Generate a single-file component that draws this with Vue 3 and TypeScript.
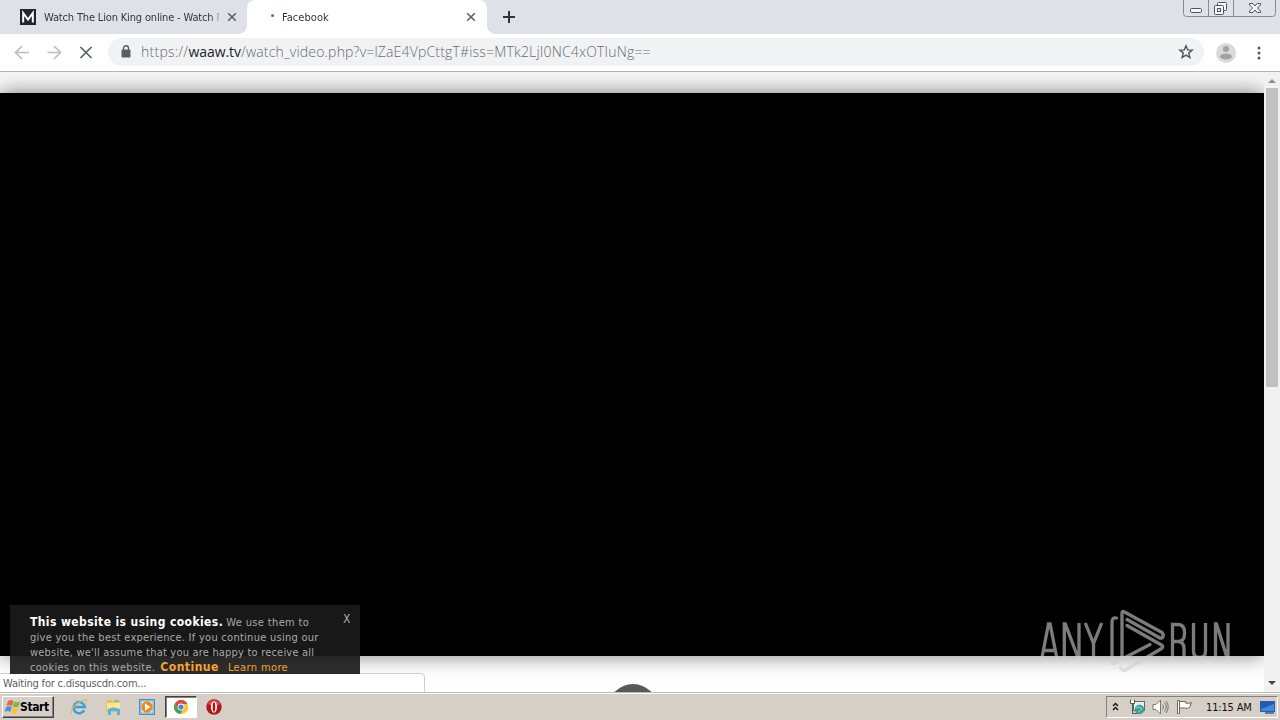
<script setup lang="ts">
interface Tab { title: string; active: boolean }
const tabs: Tab[] = [
  { title: 'Watch The Lion King online - Watch M', active: false },
  { title: 'Facebook', active: true },
]
const cookieLines: string[] = [
  'give you the best experience. If you continue using our',
  "website, we'll assume that you are happy to receive all",
]
</script>

<template>
  <div class="screen">
    <header class="tabstrip">
      <div v-for="tab in tabs" :key="tab.title" class="tab" :class="{ active: tab.active }">
        <svg v-if="!tab.active" class="fav" width="16" height="16" viewBox="0 0 16 16">
          <rect width="16" height="16" fill="#20262b" />
          <path d="M3.200 13.500V4L8 10.500 12.800 4v9.500" fill="none" stroke="#fff" stroke-width="2" />
        </svg>
        <span v-else class="fav"><i class="spinner"></i></span>
        <span class="tab-title">{{ tab.title }}</span>
        <svg class="tab-close" width="10" height="10" viewBox="0 0 10 10">
          <path d="M1.200 1.200l7.600 7.600M8.800 1.200L1.200 8.800" stroke="#5e6165" stroke-width="1.600" />
        </svg>
      </div>
      <svg class="plus" width="12" height="12" viewBox="0 0 12 12">
        <path d="M6 0v12M0 6h12" stroke="#30343b" stroke-width="2" />
      </svg>
      <div class="winbtns">
        <svg width="93" height="18" viewBox="0 0 93 18">
          <path d="M.5 0v13.500q0 3 3 3h86q3 0 3-3V0M25.500 0v16M50.500 0v16" fill="none" stroke="#858a95" />
          <g fill="#f4f5f8" stroke="#4d5360">
            <rect x="7.500" y="8.500" width="11" height="4" rx="1" />
            <rect x="34.500" y="2.500" width="9" height="8" rx="1" />
            <rect x="31.500" y="5.500" width="9" height="9" rx="1" />
            <rect x="34.500" y="8.500" width="3" height="3" />
            <path d="M66.500 3.500h3.500l2 2.500 2-2.500h3.500v1.500l-3 3 3 3v1.500H74l-2-2.500-2 2.500h-3.500V11l3-3-3-3z" />
          </g>
        </svg>
      </div>
    </header>

    <div class="toolbar">
      <svg class="nav" width="96" height="28" viewBox="0 0 96 28" fill="none" stroke-width="1.700">
        <path d="M22 13.500H9M15 7l-6.500 6.500L15 20M40.500 13.500h12.500M47 7l6.500 6.500L47 20" stroke="#bbbdbf" />
        <path d="M73.500 8l11 11M84.500 8l-11 11" stroke="#5b5e62" />
      </svg>
      <div class="omnibox">
        <svg class="lock" width="10" height="14" viewBox="0 0 10 14">
          <rect x=".5" y="4.500" width="9" height="8" rx="1" fill="#5b5f64" />
          <path d="M2.500 5V3.300a2.500 2.500 0 0 1 5 0V5" fill="none" stroke="#5b5f64" stroke-width="1.400" />
        </svg>
        <span class="url"><i>https://</i><b>waaw.tv</b>/watch_video.php?v=lZaE4VpCttgT#iss=MTk2LjI0NC4xOTIuNg==</span>
        <svg class="star" width="16" height="16" viewBox="0 0 16 16">
          <path d="M8 1.800l1.700 4.100 4.500.3-3.500 2.900 1.200 4.400L8 11.100l-3.900 2.400 1.200-4.400-3.500-2.900 4.500-.3z" fill="none" stroke="#505357" stroke-width="1.400" />
        </svg>
      </div>
      <svg class="avatar" width="20" height="20" viewBox="0 0 20 20">
        <circle cx="10" cy="10" r="10" fill="#dadada" />
        <circle cx="10" cy="6" r="3" fill="#a2a2a2" />
        <ellipse cx="10" cy="13.500" rx="6" ry="3" fill="#a2a2a2" />
      </svg>
      <svg class="dots" width="4" height="14" viewBox="0 0 4 14" fill="#55585c">
        <circle cx="2" cy="2" r="1.500" /><circle cx="2" cy="7" r="1.500" /><circle cx="2" cy="12" r="1.500" />
      </svg>
    </div>

    <main class="page">
      <div class="viewport">
        <div class="lead"></div>
        <div class="video"></div>
        <div class="below"><div class="knob"></div></div>
        <aside class="cookie">
          <div class="l1"><strong>This website is using cookies.</strong> <span>We use them to</span></div>
          <div v-for="(line, i) in cookieLines" :key="i" :class="'m' + i">{{ line }}</div>
          <div class="l4"><span>cookies on this website.</span><strong class="go">Continue</strong><a>Learn more</a></div>
          <span class="dismiss">X</span>
        </aside>
        <div class="status">Waiting for c.disquscdn.com...</div>
        <svg class="watermark" width="200" height="66" viewBox="0 0 200 66">
          <g class="mark" fill="none" stroke="#cfcfcf" stroke-width="3.300">
            <path d="M2.700 51L9.500 16h1.600L18 51M5 42.500h11M25.300 51V16h1L39 49.500h1V15M46.300 15l8.200 20.500L62.700 15M54.500 34v17" />
            <path d="M133.500 51V16.500h5q7 0 7 7.500v2q0 7.500-7 7.500h-5M138.500 33.500q6.500 0 6.500 7V51M154.500 15v28q0 6.500 6 6.500t6-6.500V15M176.500 51V16h1L188 49.500h1V15" />
            <g stroke-linecap="round" stroke-linejoin="round">
              <path d="M77.500 10q-4.500-1-4.500 4v40q0 2.500 2.500 1L111 36.500" />
              <path d="M83 48V5q0-2.500 2.500-1L123 24.500q2.500 3 0 5.500h-2L88 11.500" />
              <path d="M88 17.500L122.500 37q2.500 1.500 0 3.500L85.500 62.500q-3 0-4-3" />
            </g>
          </g>
        </svg>
      </div>
      <div class="scroll">
        <svg class="up" width="8" height="4" viewBox="0 0 8 4"><path d="M0 4L4 0l4 4z" fill="#909090" /></svg>
        <div class="thumb"></div>
        <svg class="down" width="8" height="4" viewBox="0 0 8 4"><path d="M0 0h8L4 4z" fill="#454545" /></svg>
      </div>
    </main>

    <footer class="taskbar">
      <div class="start">
        <svg width="17" height="16" viewBox="0 0 17 16">
          <path d="M4 2q3-2 5.500 0L8 7Q5 5.500 2.500 7z" fill="#ed6636" />
          <path d="M10.300 2.500q3 1.500 6 0L14.500 7.500q-3 1.500-5.800 0z" fill="#7dba42" />
          <path d="M2.200 8q3-1.500 5.500 0L6.200 13q-3-2-5.700 0z" fill="#4c91d8" />
          <path d="M8.500 8.500q3 1.500 5.800 0L12.800 14q-3 1.500-5.800 0z" fill="#f9c32f" />
        </svg>
        <span>Start</span>
      </div>
      <div class="quick ie">
        <svg width="18" height="18" viewBox="0 0 18 18" fill="none">
          <path d="M14.200 12.300a5.600 5.600 0 1 1 .6-3.300H5" stroke="#3a9fdc" stroke-width="2.500" />
          <path d="M2 16.500C-1 14 4 7 10 3.500q6-3 6.500-1 .2 1-.8 2.500" stroke="#e9b83b" stroke-width="1.100" />
        </svg>
      </div>
      <div class="quick">
        <svg width="17" height="16" viewBox="0 0 17 16">
          <path d="M1 3l1-2h5l1 2h7v10H1z" fill="#e2c25c" />
          <path d="M2 4h13v6H2z" fill="#fbe994" />
          <path d="M3 10q5-3 12 0v6h-3v-4H6v4H3z" fill="#5fb0da" />
          <path d="M9 2h5" stroke="#76b96a" stroke-width="1.500" />
        </svg>
      </div>
      <div class="quick">
        <svg width="16" height="16" viewBox="0 0 16 16">
          <rect x=".5" y=".5" width="15" height="15" fill="#8bbce5" stroke="#4b8dcb" />
          <rect x="2.500" y="2.500" width="11" height="11" fill="#d7e8f5" />
          <circle cx="8" cy="8" r="5.700" fill="#f28a19" />
          <path d="M6 4.500L11.500 8 6 11.500z" fill="#fff" />
        </svg>
      </div>
      <div class="quick pressed">
        <svg width="14" height="14" viewBox="0 0 14 14">
          <circle cx="7" cy="7" r="7" fill="#fac827" />
          <path d="M7 4H13.400A7 7 0 0 0 .9 3.500L4 9z" fill="#df4938" />
          <path d="M.9 3.500A7 7 0 0 0 6.500 14L10 8.500 4 9z" fill="#3ba55b" />
          <path d="M8 4h5.400A7 7 0 0 1 6.500 14L10 8z" fill="#fac827" />
          <circle cx="7" cy="7" r="3.400" fill="#fff" /><circle cx="7" cy="7" r="2.600" fill="#4b83e8" />
        </svg>
      </div>
      <div class="quick opera">
        <svg width="16" height="16" viewBox="0 0 16 16">
          <circle cx="8" cy="8" r="7.700" fill="#b0181d" />
          <path d="M2 5a6.700 6.700 0 0 1 12 0q-6 4-12 0z" fill="#d9524e" />
          <ellipse cx="8" cy="8" rx="3" ry="5.700" fill="#fff" /><ellipse cx="8" cy="8" rx="1.300" ry="4.800" fill="#a31318" />
        </svg>
      </div>
      <div class="tray">
        <svg class="chev" width="7" height="9" viewBox="0 0 7 9" fill="none" stroke="#111" stroke-width="1.400"><path d="M1 4l2.500-2.500L6 4M1 8l2.500-2.500L6 8" /></svg>
        <svg class="net" width="16" height="16" viewBox="0 0 16 16">
          <rect x="4.500" y="2.500" width="11" height="9" fill="#e5f0ed" stroke="#586f69" />
          <path d="M1.500 .5v4h4v-4M3.500 4.500v10h5" fill="none" stroke="#555" />
          <path d="M2 1.500h3V4H2z" fill="#fff" />
          <circle cx="10.500" cy="10.500" r="4.700" fill="#3a9c91" />
          <path d="M7 9l4-1 2 2-4 3" fill="none" stroke="#9ee0d0" />
        </svg>
        <svg class="snd" width="17" height="16" viewBox="0 0 17 16" fill="none" stroke="#777">
          <path d="M1 5.500h3L8.500 1v14L4 10.500H1z" fill="#fff" />
          <path d="M10.500 5.500q2 2.500 0 5M12.500 3.500q3.500 4.500 0 9M14 2q4.500 6 0 12" />
        </svg>
        <svg class="flag" width="16" height="16" viewBox="0 0 16 16" fill="#fff" stroke="#666">
          <path d="M1.500 1.500h2v13h-2z" /><path d="M3.500 2.500h6v1.500q3 1 6-.5l-2 5q-2 1.500-5 .5H3.500z" />
        </svg>
        <span class="clock">11:15 AM</span>
        <svg class="desk" width="15" height="13" viewBox="0 0 15 13">
          <rect x=".5" y=".5" width="14" height="10" fill="#1e5cb8" stroke="#315b9a" />
          <path d="M1 8L14 3v7H1z" fill="#3f89dc" /><path d="M5 12h9" stroke="#335c94" stroke-width="1.500" />
        </svg>
      </div>
    </footer>
  </div>
</template>

<style>
html, body { margin: 0; overflow: hidden; background: #fff; }
</style>

<style scoped>
* { box-sizing: border-box; }
svg { display: block; flex: none; }
.screen { width: 1280px; height: 720px; display: flex; flex-direction: column; overflow: hidden; font-family: "DejaVu Sans Condensed", "DejaVu Sans", sans-serif; font-stretch: condensed; font-size: 11px; color: #222; }
.tabstrip { position: relative; height: 34px; flex: none; background: #dee1e8; display: flex; align-items: center; }
.tab { position: relative; width: 247px; height: 34px; display: flex; align-items: center; padding-left: 20px; }
.tab.active { width: 240px; background: #fff; border-radius: 8px 8px 0 0; padding-left: 11px; }
.tab.active::before, .tab.active::after { content: ""; position: absolute; bottom: 0; width: 8px; height: 8px; }
.tab.active::before { left: -8px; background: radial-gradient(circle at 0 0, transparent 7.500px, #fff 8px); }
.tab.active::after { right: -8px; background: radial-gradient(circle at 100% 0, transparent 7.500px, #fff 8px); }
.fav { width: 16px; height: 16px; margin-right: 8px; flex: none; }
.spinner { display: block; margin: 5px 0 0 13px; width: 3px; height: 3px; border-radius: 2px; background: #3972ce; }
.tab-title { width: 175px; overflow: hidden; white-space: nowrap; letter-spacing: -.16px; color: #33363b; mask-image: linear-gradient(90deg, #000 95%, transparent 102%); }
.tab-close { margin-left: 8px; }
.active .tab-title { width: 176px; letter-spacing: .05px; }
.plus { margin-left: 16px; }
.winbtns { position: absolute; left: 1183px; top: 0; }
.toolbar { height: 38px; flex: none; background: #fff; border-bottom: 1px solid #b2b4b4; display: flex; align-items: center; padding-left: 7px; }
.omnibox { width: 1096px; height: 28px; margin-left: 5px; margin-bottom: 1px; border-radius: 14px; background: #f0f2f4; display: flex; align-items: center; padding: 0 10px 0 13px; }
.url { margin-left: 10px; margin-top: -1px; white-space: nowrap; font-family: "Open Sans", "Noto Sans", sans-serif; font-weight: 300; font-stretch: normal; font-size: 14px; letter-spacing: .18px; color: #666c72; }
.url i { font-style: normal; letter-spacing: .25px; }
.url b { font-weight: 400; letter-spacing: -.05px; color: #202124; }
.star { margin-left: auto; }
.avatar { margin-left: 12px; }
.dots { margin-left: 21px; }
.page { height: 620px; flex: none; display: flex; }
.viewport { position: relative; width: 1264px; height: 620px; overflow: hidden; display: flex; flex-direction: column; background: #fff; }
.lead { height: 21px; flex: none; background: #f7f7f7; }
.video { height: 563px; flex: none; background: #000; box-shadow: 0 0 20px rgba(0,0,0,.5); position: relative; }
.below { height: 36px; display: flex; justify-content: center; padding-top: 28px; }
.knob { width: 50px; height: 50px; flex: none; border-radius: 50%; background: #585858; margin-left: 2px; }
.cookie { position: absolute; left: 10px; top: 533px; width: 350px; height: 69px; background: rgba(26,26,26,.92); padding: 9.500px 20px 0; overflow: hidden; line-height: 15.300px; color: #aaa; white-space: nowrap; }
.cookie strong { color: #fff; font-size: 12px; letter-spacing: .4px; }
.l1 span { letter-spacing: .35px; }
.m0 { letter-spacing: .27px; }
.m1 { letter-spacing: .2px; }
.l4 { letter-spacing: .28px; }
.cookie .go, .cookie a { color: #f6a22d; }
.cookie .go { margin-left: 5px; letter-spacing: .5px; }
.cookie a { margin-left: 9px; letter-spacing: .38px; }
.dismiss { position: absolute; left: 333px; top: 7px; font-size: 12px; }
.status { position: absolute; left: -1px; top: 601px; width: 426px; height: 20px; background: #fff; border: 1px solid #d0d0d0; border-radius: 0 4px 0 0; padding-left: 3px; line-height: 19px; letter-spacing: -.2px; color: #606060; }
.cookie { z-index: 1; }
.watermark { position: absolute; left: 1039px; top: 536px; }
.mark { opacity: .6; }
.scroll { width: 16px; height: 620px; background: #f1f1f1; display: flex; flex-direction: column; align-items: center; }
.up { margin-top: 7px; }
.thumb { width: 12px; height: 299px; background: #c1c1c1; margin-top: 5px; }
.down { margin-top: auto; margin-bottom: 7px; }
.taskbar { height: 28px; flex: none; background: #d5cfc8; border-top: 1px solid #bebbb5; box-shadow: inset 0 1px #fff; display: flex; align-items: center; padding: 3px 2px 2px; }
.start { width: 52px; height: 22px; border: 1px solid; border-color: #fff #404040 #404040 #fff; box-shadow: inset -1px -1px #858078; display: flex; align-items: center; padding-left: 1px; font-size: 12px; font-weight: 700; letter-spacing: -.4px; color: #000; }
.start span { margin-left: -1px; }
.quick { width: 32px; height: 22px; display: flex; align-items: center; justify-content: center; margin-left: 2px; }
.quick.ie { margin-left: 9px; }
.quick.opera { margin-left: 1px; }
.pressed { background: #fff; border: 1px solid; border-color: #404040 #fff #fff #404040; box-shadow: inset 1px 1px #858078; }
.tray { width: 172px; height: 22px; margin-left: auto; border: 1px solid; border-color: #858078 #fff #fff #858078; display: flex; align-items: center; color: #111; }
.chev { margin-left: 5px; margin-top: -2px; }
.net { margin-left: 10px; }
.snd { margin-left: 7px; }
.flag { margin-left: 7px; }
.clock { margin-left: 14px; width: 48px; white-space: nowrap; letter-spacing: -.15px; }
.desk { margin-left: 6px; }
</style>
